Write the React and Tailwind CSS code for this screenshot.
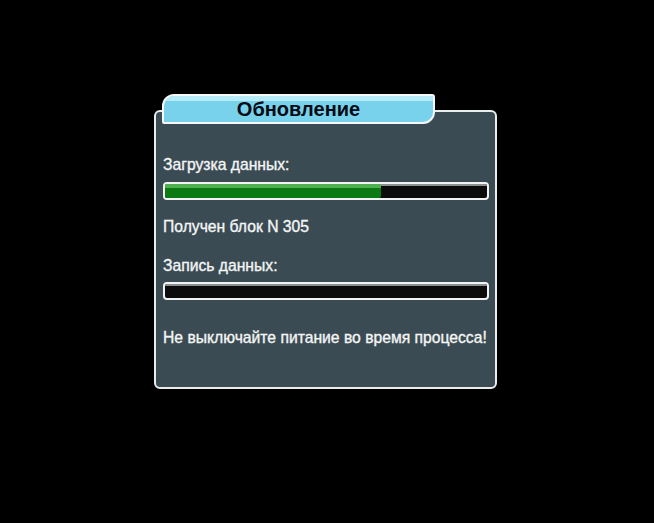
import React from 'react';

// Firmware update dialog: title tab, two progress bars and status lines.
const Bar = ({ value }) => (
  <div className="h-[18px] w-[326px] rounded-[4px] border-2 border-[#f2f4f4] bg-[#0c0c0c] overflow-hidden">
    <div className="h-[2px] w-full bg-[#8a8f90]" />
    {value > 0 && (
      <div className="-mt-[2px] h-[14px] flex flex-col rounded-r-[2px] overflow-hidden" style={{ width: `${value}%` }}>
        <div className="h-[4px] bg-[#4fb04f]" />
        <div className="flex-1 bg-[#0b7a12]" />
      </div>
    )}
  </div>
);

export default function App() {
  return (
    <div
      className="w-[654px] h-[523px] bg-black pt-[94px] pl-[154px]"
      style={{ fontFamily: '"Liberation Sans", Arial, sans-serif' }}
    >
      <div className="relative w-[343px]">
        {/* title tab overlaps the panel's top border */}
        <div className="absolute left-[8px] top-0 z-10 w-[273px] h-[30px] rounded-tl-[12px] rounded-tr-[3px] rounded-br-[12px] rounded-bl-[2px] border-2 border-[#f4f8f9] bg-[#78d2ec] overflow-hidden flex flex-col">
          <div className="h-[5px] bg-[#b6ecf8]" />
          <div className="flex-1 flex items-center justify-center -mt-[5px]">
            <span className="text-[20px] font-bold text-[#050a14] leading-none">Обновление</span>
          </div>
        </div>

        <div className="pt-[16px]">
          <div className="h-[279px] rounded-[6px] border-2 border-[#e9eded] bg-[#3b4b53] pt-[44px] pl-[7px] flex flex-col text-[#f4f6f6] text-[15.7px] leading-[18px] [-webkit-text-stroke:0.35px_#f4f6f6]">
            <div>Загрузка данных:</div>
            <div className="mt-[8px]">
              <Bar value={67} />
            </div>
            <div className="mt-[18px]">Получен блок N 305</div>
            <div className="mt-[21px]">Запись данных:</div>
            <div className="mt-[7px]">
              <Bar value={0} />
            </div>
            <div className="mt-[29px]">Не выключайте питание во время процесса!</div>
          </div>
        </div>
      </div>
    </div>
  );
}
